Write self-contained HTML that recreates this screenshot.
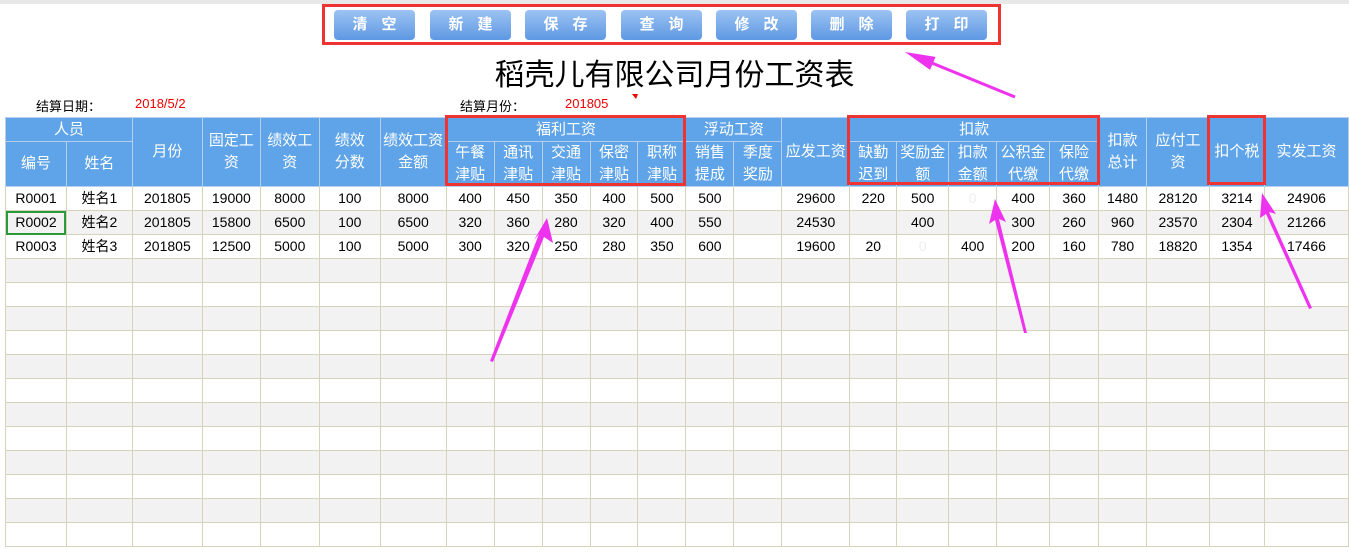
<!DOCTYPE html>
<html><head><meta charset="utf-8"><style>
body{margin:0;width:1349px;height:556px;overflow:hidden;background:#fff;font-family:"Liberation Sans","Noto Sans CJK SC",sans-serif;position:relative}
.top{position:absolute;left:0;top:0;width:1349px;height:4px;background:#e8e8e8}
.btn{position:absolute;top:10px;height:30px;width:81px;border-radius:4px;background:linear-gradient(#9cc3f2,#5e98e3);color:#fff;font-weight:bold;font-size:15px;line-height:30px;text-align:center;letter-spacing:14px;text-indent:14px}
.title{position:absolute;left:0;width:1349px;top:50px;text-align:center;font-size:30px;color:#000}
.lbl{position:absolute;top:96px;font-size:13px}
table{position:absolute;left:5px;top:117px;border-collapse:collapse;table-layout:fixed}
td{border:1px solid #d6d2bc;font-size:14px;text-align:center;padding:0;height:23px;line-height:17px;overflow:hidden;white-space:nowrap}
th{background:#5fa4e8;color:#fff;font-weight:normal;font-size:15px;border:1px solid #b5d0ec;padding:0;line-height:22px}
tr.g td{background:#f2f2f2}
.red{position:absolute;border:3px solid #ee3333;box-sizing:border-box}
</style></head><body>
<div class="top"></div>
<div class="red" style="left:322px;top:4px;width:679px;height:41px"></div>
<div class="btn" style="left:334px">清空</div>
<div class="btn" style="left:430px">新建</div>
<div class="btn" style="left:525px">保存</div>
<div class="btn" style="left:621px">查询</div>
<div class="btn" style="left:716px">修改</div>
<div class="btn" style="left:811px">删除</div>
<div class="btn" style="left:906px">打印</div>
<div class="title">稻壳儿有限公司月份工资表</div>
<div class="lbl" style="left:36px">结算日期：</div>
<div class="lbl" style="left:135px;color:#e00">2018/5/2</div>
<div class="lbl" style="left:460px">结算月份：</div>
<div class="lbl" style="left:565px;color:#e00">201805</div>
<table>
<colgroup>
<col style="width:61px"><col style="width:66px"><col style="width:70px"><col style="width:58px"><col style="width:59px"><col style="width:61px"><col style="width:66px"><col style="width:48px"><col style="width:48px"><col style="width:48px"><col style="width:48px"><col style="width:48px"><col style="width:48px"><col style="width:48px"><col style="width:68px"><col style="width:47px"><col style="width:52px"><col style="width:48px"><col style="width:53px"><col style="width:49px"><col style="width:48px"><col style="width:63px"><col style="width:55px"><col style="width:84px">
</colgroup>
<tr style="height:24px"><th colspan="2">人员</th><th rowspan="2">月份</th><th rowspan="2">固定工<br>资</th><th rowspan="2">绩效工<br>资</th><th rowspan="2">绩效<br>分数</th><th rowspan="2">绩效工资<br>金额</th><th colspan="5">福利工资</th><th colspan="2">浮动工资</th><th rowspan="2">应发工资</th><th colspan="5">扣款</th><th rowspan="2">扣款<br>总计</th><th rowspan="2">应付工<br>资</th><th rowspan="2">扣个税</th><th rowspan="2">实发工资</th></tr>
<tr style="height:44px"><th>编号</th><th>姓名</th><th>午餐<br>津贴</th><th>通讯<br>津贴</th><th>交通<br>津贴</th><th>保密<br>津贴</th><th>职称<br>津贴</th><th>销售<br>提成</th><th>季度<br>奖励</th><th>缺勤<br>迟到</th><th>奖励金<br>额</th><th>扣款<br>金额</th><th>公积金<br>代缴</th><th>保险<br>代缴</th></tr>
<tr><td>R0001</td><td>姓名1</td><td>201805</td><td>19000</td><td>8000</td><td>100</td><td>8000</td><td>400</td><td>450</td><td>350</td><td>400</td><td>500</td><td>500</td><td></td><td>29600</td><td>220</td><td>500</td><td style="color:#eee">0</td><td>400</td><td>360</td><td>1480</td><td>28120</td><td>3214</td><td>24906</td></tr>
<tr class="g"><td style="outline:2px solid #2a9a3a;outline-offset:-2px">R0002</td><td>姓名2</td><td>201805</td><td>15800</td><td>6500</td><td>100</td><td>6500</td><td>320</td><td>360</td><td>280</td><td>320</td><td>400</td><td>550</td><td></td><td>24530</td><td></td><td>400</td><td></td><td>300</td><td>260</td><td>960</td><td>23570</td><td>2304</td><td>21266</td></tr>
<tr><td>R0003</td><td>姓名3</td><td>201805</td><td>12500</td><td>5000</td><td>100</td><td>5000</td><td>300</td><td>320</td><td>250</td><td>280</td><td>350</td><td>600</td><td></td><td>19600</td><td>20</td><td style="color:#eee">0</td><td>400</td><td>200</td><td>160</td><td>780</td><td>18820</td><td>1354</td><td>17466</td></tr>
<tr class="g"><td></td><td></td><td></td><td></td><td></td><td></td><td></td><td></td><td></td><td></td><td></td><td></td><td></td><td></td><td></td><td></td><td></td><td></td><td></td><td></td><td></td><td></td><td></td><td></td></tr>
<tr><td></td><td></td><td></td><td></td><td></td><td></td><td></td><td></td><td></td><td></td><td></td><td></td><td></td><td></td><td></td><td></td><td></td><td></td><td></td><td></td><td></td><td></td><td></td><td></td></tr>
<tr class="g"><td></td><td></td><td></td><td></td><td></td><td></td><td></td><td></td><td></td><td></td><td></td><td></td><td></td><td></td><td></td><td></td><td></td><td></td><td></td><td></td><td></td><td></td><td></td><td></td></tr>
<tr><td></td><td></td><td></td><td></td><td></td><td></td><td></td><td></td><td></td><td></td><td></td><td></td><td></td><td></td><td></td><td></td><td></td><td></td><td></td><td></td><td></td><td></td><td></td><td></td></tr>
<tr class="g"><td></td><td></td><td></td><td></td><td></td><td></td><td></td><td></td><td></td><td></td><td></td><td></td><td></td><td></td><td></td><td></td><td></td><td></td><td></td><td></td><td></td><td></td><td></td><td></td></tr>
<tr><td></td><td></td><td></td><td></td><td></td><td></td><td></td><td></td><td></td><td></td><td></td><td></td><td></td><td></td><td></td><td></td><td></td><td></td><td></td><td></td><td></td><td></td><td></td><td></td></tr>
<tr class="g"><td></td><td></td><td></td><td></td><td></td><td></td><td></td><td></td><td></td><td></td><td></td><td></td><td></td><td></td><td></td><td></td><td></td><td></td><td></td><td></td><td></td><td></td><td></td><td></td></tr>
<tr><td></td><td></td><td></td><td></td><td></td><td></td><td></td><td></td><td></td><td></td><td></td><td></td><td></td><td></td><td></td><td></td><td></td><td></td><td></td><td></td><td></td><td></td><td></td><td></td></tr>
<tr class="g"><td></td><td></td><td></td><td></td><td></td><td></td><td></td><td></td><td></td><td></td><td></td><td></td><td></td><td></td><td></td><td></td><td></td><td></td><td></td><td></td><td></td><td></td><td></td><td></td></tr>
<tr><td></td><td></td><td></td><td></td><td></td><td></td><td></td><td></td><td></td><td></td><td></td><td></td><td></td><td></td><td></td><td></td><td></td><td></td><td></td><td></td><td></td><td></td><td></td><td></td></tr>
<tr class="g"><td></td><td></td><td></td><td></td><td></td><td></td><td></td><td></td><td></td><td></td><td></td><td></td><td></td><td></td><td></td><td></td><td></td><td></td><td></td><td></td><td></td><td></td><td></td><td></td></tr>
<tr><td></td><td></td><td></td><td></td><td></td><td></td><td></td><td></td><td></td><td></td><td></td><td></td><td></td><td></td><td></td><td></td><td></td><td></td><td></td><td></td><td></td><td></td><td></td><td></td></tr>
</table>
<div class="red" style="left:445px;top:115px;width:241px;height:71px"></div>
<div class="red" style="left:847px;top:115px;width:253px;height:70px"></div>
<div class="red" style="left:1207px;top:115px;width:59px;height:70px"></div>
<svg style="position:absolute;left:0;top:0" width="1349" height="556">
<g fill="#ee33ee">
<polygon points="905,52 935.5,56.9 933.4,62 1015.6,95.6 1014.4,98.4 932.2,64.8 930.1,69.9"/>
<polygon points="547,218 553,243 544,237 493,362 490,361 539,234 534,240"/>
<polygon points="995,199 1006,222 999,219 1027,333 1024,333 995,220 989,224"/>
<polygon points="1262,193 1276,214 1269,212 1312,308 1309,309 1266,214 1260,218"/>
</g>
<polygon points="632,94 638,94 636,99" fill="#e00"/>
</svg>
</body></html>
